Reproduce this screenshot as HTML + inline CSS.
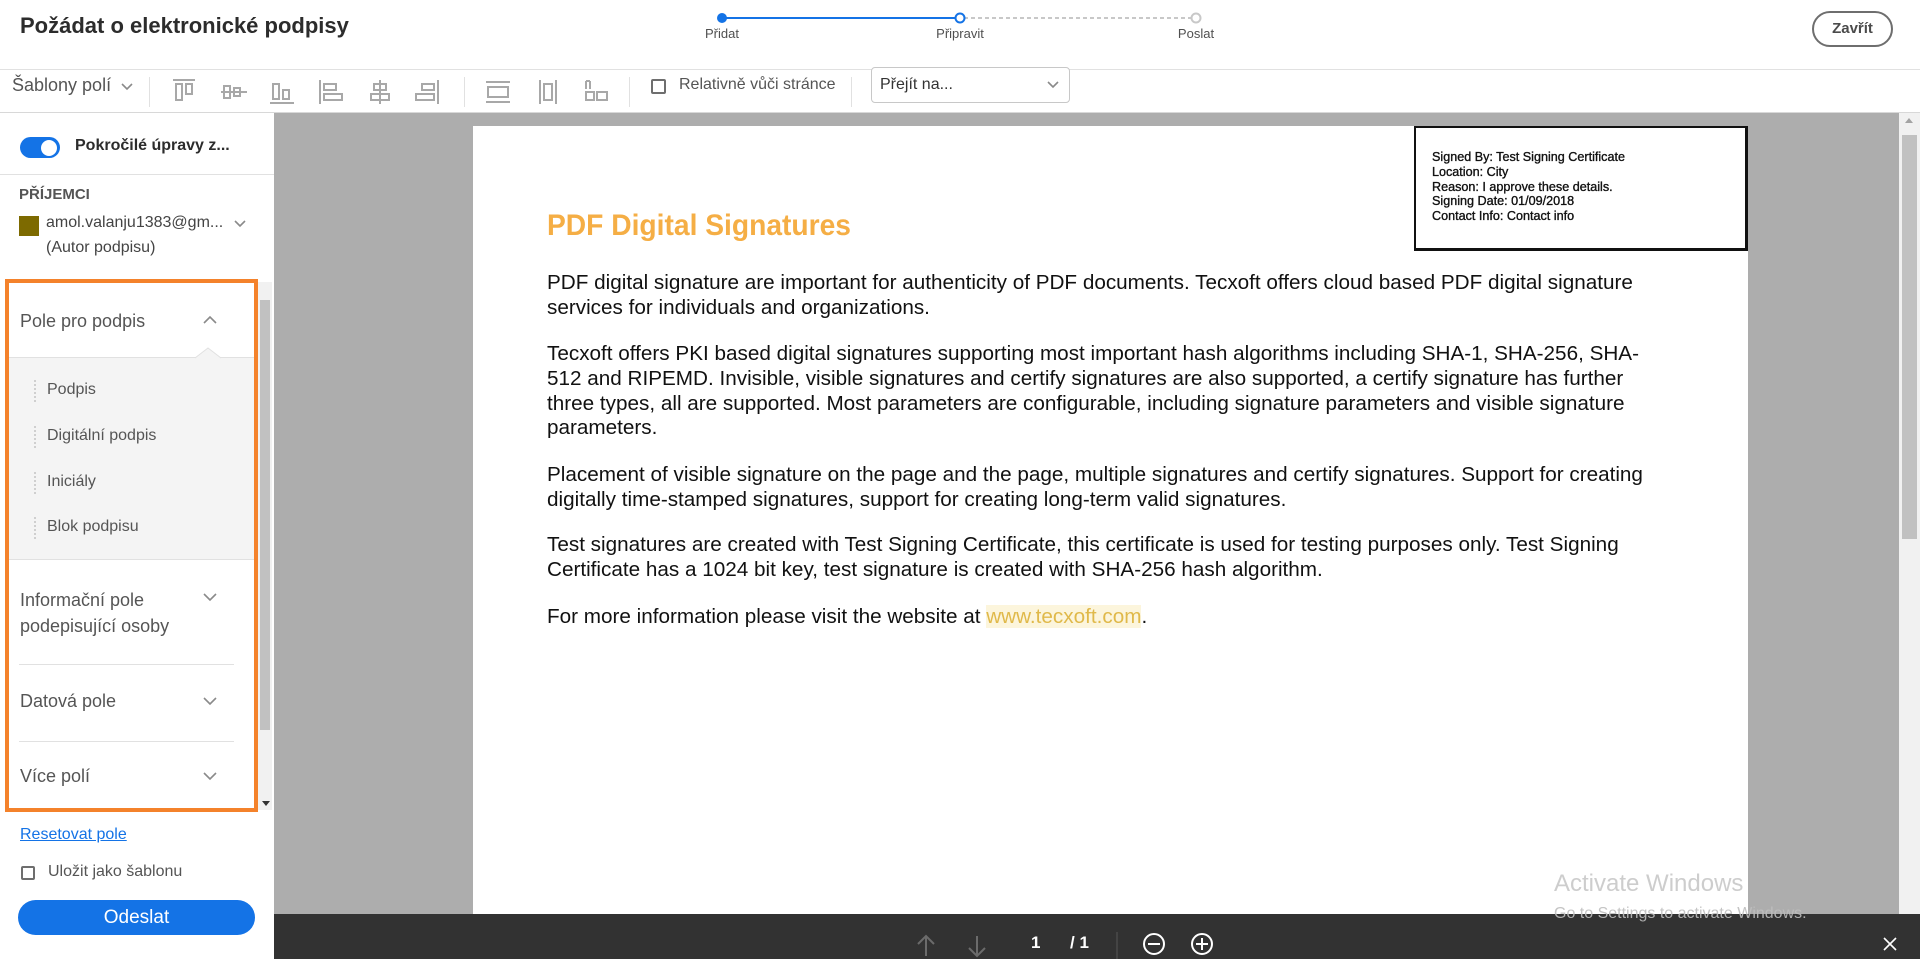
<!DOCTYPE html>
<html><head><meta charset="utf-8">
<style>
*{margin:0;padding:0;box-sizing:border-box}
body{width:1920px;height:959px;overflow:hidden;background:#fff;font-family:"Liberation Sans",Arial,sans-serif;color:#4b4b4b;position:relative}
.abs{position:absolute}
.hdr{left:0;top:0;width:1920px;height:70px;border-bottom:1px solid #e1e1e1;background:#fff}
.title{left:20px;top:13px;font-size:22px;font-weight:bold;color:#2c2c2c}
.step{font-size:13px;color:#505050;top:26px;transform:translateX(-50%)}
.close{left:1812px;top:11px;width:81px;height:36px;border:2px solid #6e6e6e;border-radius:18px;font-size:15px;font-weight:bold;color:#4b4b4b;text-align:center;line-height:32px}
.tb{left:0;top:70px;width:1920px;height:43px;border-bottom:1px solid #d8d8d8;background:#fff}
.sep{width:1px;height:30px;background:#e1e1e1;top:77px}
.ic{top:77px}
.gray{left:274px;top:113px;width:1646px;height:846px;background:#adadad}
.page{left:473px;top:126px;width:1275px;height:800px;background:#fff}
.p{font-family:"Liberation Sans",Arial,sans-serif;font-size:20.7px;color:#111;line-height:24.8px;white-space:nowrap;left:547px}
.sig{left:1414px;top:126px;width:334px;height:125px;border:2px solid #111;border-right-width:3px;border-bottom-width:3px;background:#fff}
.sig div{font-size:12.6px;line-height:14.8px;color:#111;-webkit-text-stroke:0.35px #111}
.side{left:0;top:113px;width:274px;height:846px;background:#fff}
.sec{font-size:18px;color:#555;left:20px}
.chev{stroke:#8a8a8a;fill:none;stroke-width:1.6}
.item{font-size:16px;color:#555;left:47px}
.dot{left:34px;width:0;height:22px;border-left:2px dotted #cfcfcf}
.bar{left:274px;top:914px;width:1646px;height:45px;background:#323232}
</style></head><body>

<div class="abs hdr"></div>
<div class="abs title">Požádat o elektronické podpisy</div>
<svg class="abs" style="left:716px;top:10px" width="490" height="16">
<line x1="6" y1="8" x2="244" y2="8" stroke="#1473e6" stroke-width="2"/>
<line x1="248" y1="8" x2="480" y2="8" stroke="#c8c8c8" stroke-width="2" stroke-dasharray="4 3"/>
<circle cx="6" cy="8" r="5" fill="#1473e6"/>
<circle cx="244" cy="8" r="4.5" fill="#fff" stroke="#1473e6" stroke-width="2"/>
<circle cx="480" cy="8" r="4.5" fill="#fff" stroke="#c8c8c8" stroke-width="2"/>
</svg>
<div class="abs step" style="left:722px">Přidat</div>
<div class="abs step" style="left:960px">Připravit</div>
<div class="abs step" style="left:1196px">Poslat</div>
<div class="abs close">Zavřít</div>

<div class="abs tb"></div>
<div class="abs" style="left:12px;top:75px;font-size:18px;color:#555">Šablony polí</div>
<svg class="abs" style="left:120px;top:82px" width="14" height="10"><path d="M2 2l5 5 5-5" class="chev" stroke="#777"/></svg>
<div class="abs sep" style="left:149px"></div>
<svg class="abs ic" style="left:170px" width="280" height="30" fill="none" stroke="#a8a8a8" stroke-width="2">
<path d="M3 3h22M6 7h6v16h-6zM16 7h6v10h-6z"/>
<path d="M51 15h26M54 9h6v12h-6zM64 11h6v8h-6z"/>
<path d="M100 26h24M103 7h6v15h-6zM113 13h6v9h-6z"/>
<path d="M150 3v24M154 7h12v6h-12zM154 17h18v6h-18z"/>
<path d="M210 3v24M204 7h12v6h-12zM201 17h18v6h-18z"/>
<path d="M268 3v24M252 7h12v6h-12zM246 17h18v6h-18z"/>
</svg>
<div class="abs sep" style="left:464px"></div>
<svg class="abs ic" style="left:484px" width="130" height="30" fill="none" stroke="#a8a8a8" stroke-width="2">
<path d="M2 5h24M2 25h24M4 10h20v10h-20z"/>
<path d="M56 3v24M72 3v24M60 7h8v16h-8z"/>
<path d="M102 4v8M106 4v8M102 15h8v8h-8zM113 15h10v8h-10zM102 4h4"/>
</svg>
<div class="abs sep" style="left:629px"></div>
<div class="abs" style="left:651px;top:79px;width:15px;height:15px;border:2px solid #6e6e6e;border-radius:2px"></div>
<div class="abs" style="left:679px;top:76px;font-size:16px;color:#555">Relativně vůči stránce</div>
<div class="abs sep" style="left:851px"></div>
<div class="abs" style="left:871px;top:67px;width:199px;height:36px;border:1px solid #c8c8c8;border-radius:4px;background:#fff"></div>
<div class="abs" style="left:880px;top:76px;font-size:16px;color:#333">Přejít na...</div>
<svg class="abs" style="left:1046px;top:80px" width="14" height="10"><path d="M2 2l5 5 5-5" class="chev"/></svg>

<div class="abs gray"></div>
<div class="abs page"></div>
<div class="abs sig"><div style="padding:22px 0 0 16px">
<div>Signed By: Test Signing Certificate</div><div>Location: City</div><div>Reason: I approve these details.</div><div>Signing Date: 01/09/2018</div><div>Contact Info: Contact info</div></div></div>
<div class="abs" style="left:547px;top:209px;font-size:30px;font-weight:bold;color:#f5ae45;transform:scaleX(0.94);transform-origin:0 0;white-space:nowrap">PDF Digital Signatures</div>
<div class="abs p" style="top:271px">PDF digital signature are important for authenticity of PDF documents. Tecxoft offers cloud based PDF digital signature<br>services for individuals and organizations.</div>
<div class="abs p" style="top:342px">Tecxoft offers PKI based digital signatures supporting most important hash algorithms including SHA-1, SHA-256, SHA-<br>512 and RIPEMD. Invisible, visible signatures and certify signatures are also supported, a certify signature has further<br>three types, all are supported. Most parameters are configurable, including signature parameters and visible signature<br>parameters.</div>
<div class="abs p" style="top:463px">Placement of visible signature on the page and the page, multiple signatures and certify signatures. Support for creating<br>digitally time-stamped signatures, support for creating long-term valid signatures.</div>
<div class="abs p" style="top:533px">Test signatures are created with Test Signing Certificate, this certificate is used for testing purposes only. Test Signing<br>Certificate has a 1024 bit key, test signature is created with SHA-256 hash algorithm.</div>
<div class="abs p" style="top:605px">For more information please visit the website at <span style="color:#e0b94a;background:#fcf5dc">www.tecxoft.com</span>.</div>

<div class="abs" style="left:1899px;top:113px;width:21px;height:801px;background:#f1f1f1"></div>
<div class="abs" style="left:1902px;top:135px;width:15px;height:404px;background:#c1c1c1"></div>
<svg class="abs" style="left:1904px;top:117px" width="10" height="8"><path d="M1 6l4-5 4 5z" fill="#a3a3a3"/></svg>

<div class="abs side"></div>
<div class="abs" style="left:20px;top:137px;width:40px;height:21px;border-radius:11px;background:#1473e6"></div>
<div class="abs" style="left:41px;top:140px;width:16px;height:16px;border-radius:50%;background:#fff"></div>
<div class="abs" style="left:75px;top:137px;font-size:16px;font-weight:bold;color:#2c2c2c">Pokročilé úpravy z...</div>
<div class="abs" style="left:0;top:174px;width:274px;height:1px;background:#e1e1e1"></div>
<div class="abs" style="left:19px;top:186px;font-size:15px;font-weight:bold;color:#555">PŘÍJEMCI</div>
<div class="abs" style="left:19px;top:216px;width:20px;height:20px;background:#7d6a00"></div>
<div class="abs" style="left:46px;top:214px;font-size:16px;color:#444">amol.valanju1383@gm...</div>
<svg class="abs" style="left:233px;top:219px" width="14" height="10"><path d="M2 2l5 5 5-5" class="chev" stroke="#666"/></svg>
<div class="abs" style="left:46px;top:239px;font-size:16px;color:#444">(Autor podpisu)</div>

<div class="abs" style="left:258px;top:282px;width:14px;height:528px;background:#f1f1f1"></div>
<div class="abs" style="left:260px;top:300px;width:10px;height:430px;background:#c1c1c1"></div>
<svg class="abs" style="left:261px;top:800px" width="10" height="8"><path d="M1 1l4 5 4-5z" fill="#333"/></svg>
<div class="abs" style="left:9px;top:357px;width:245px;height:203px;background:#f4f4f4;border-top:1px solid #e1e1e1;border-bottom:1px solid #e1e1e1"></div>
<svg class="abs" style="left:195px;top:347px" width="26" height="12"><path d="M0 11l13-10 13 10" fill="#f4f4f4" stroke="#e1e1e1"/></svg>
<div class="abs sec" style="top:311px">Pole pro podpis</div>
<svg class="abs" style="left:202px;top:315px" width="16" height="10"><path d="M2 8l6-6 6 6" class="chev"/></svg>
<div class="abs dot" style="top:380px"></div><div class="abs item" style="top:381px">Podpis</div>
<div class="abs dot" style="top:426px"></div><div class="abs item" style="top:427px">Digitální podpis</div>
<div class="abs dot" style="top:472px"></div><div class="abs item" style="top:473px">Iniciály</div>
<div class="abs dot" style="top:517px"></div><div class="abs item" style="top:518px">Blok podpisu</div>
<div class="abs sec" style="top:587px;line-height:26px">Informační pole<br>podepisující osoby</div>
<svg class="abs" style="left:202px;top:592px" width="16" height="10"><path d="M2 2l6 6 6-6" class="chev"/></svg>
<div class="abs" style="left:19px;top:664px;width:215px;height:1px;background:#e1e1e1"></div>
<div class="abs sec" style="top:691px">Datová pole</div>
<svg class="abs" style="left:202px;top:696px" width="16" height="10"><path d="M2 2l6 6 6-6" class="chev"/></svg>
<div class="abs" style="left:19px;top:741px;width:215px;height:1px;background:#e1e1e1"></div>
<div class="abs sec" style="top:766px">Více polí</div>
<svg class="abs" style="left:202px;top:771px" width="16" height="10"><path d="M2 2l6 6 6-6" class="chev"/></svg>
<div class="abs" style="left:5px;top:279px;width:253px;height:533px;border:4px solid #f4822b"></div>

<div class="abs" style="left:20px;top:826px;font-size:16px;color:#1473e6;text-decoration:underline">Resetovat pole</div>
<div class="abs" style="left:21px;top:866px;width:14px;height:14px;border:2px solid #6e6e6e;border-radius:2px"></div>
<div class="abs" style="left:48px;top:863px;font-size:16px;color:#555">Uložit jako šablonu</div>
<div class="abs" style="left:18px;top:900px;width:237px;height:35px;border-radius:18px;background:#1473e6;color:#fff;font-size:19px;text-align:center;line-height:35px">Odeslat</div>

<div class="abs bar"></div>
<svg class="abs" style="left:915px;top:932px" width="310" height="27" fill="none" stroke-width="2">
<path d="M11 24V4M3 12l8-8 8 8" stroke="#6b6b6b"/>
<path d="M62 4v20M54 16l8 8 8-8" stroke="#6b6b6b"/>
<line x1="202" y1="0" x2="202" y2="27" stroke="#555" stroke-width="1"/>
<circle cx="239" cy="12" r="10" stroke="#fff"/><path d="M233 12h12" stroke="#fff"/>
<circle cx="287" cy="12" r="10" stroke="#fff"/><path d="M281 12h12M287 6v12" stroke="#fff"/>
</svg>
<div class="abs" style="left:1031px;top:933px;font-size:17px;color:#fff;font-weight:bold">1</div>
<div class="abs" style="left:1070px;top:933px;font-size:17px;color:#fff;font-weight:bold">/ 1</div>
<svg class="abs" style="left:1882px;top:936px" width="16" height="16"><path d="M2 2l12 12M14 2L2 14" stroke="#fff" stroke-width="1.6"/></svg>

<div class="abs" style="left:1554px;top:870px;font-size:24px;color:rgba(200,200,200,0.9)">Activate Windows</div>
<div class="abs" style="left:1554px;top:905px;font-size:16px;color:rgba(190,190,190,0.9)">Go to Settings to activate Windows.</div>
</body></html>
